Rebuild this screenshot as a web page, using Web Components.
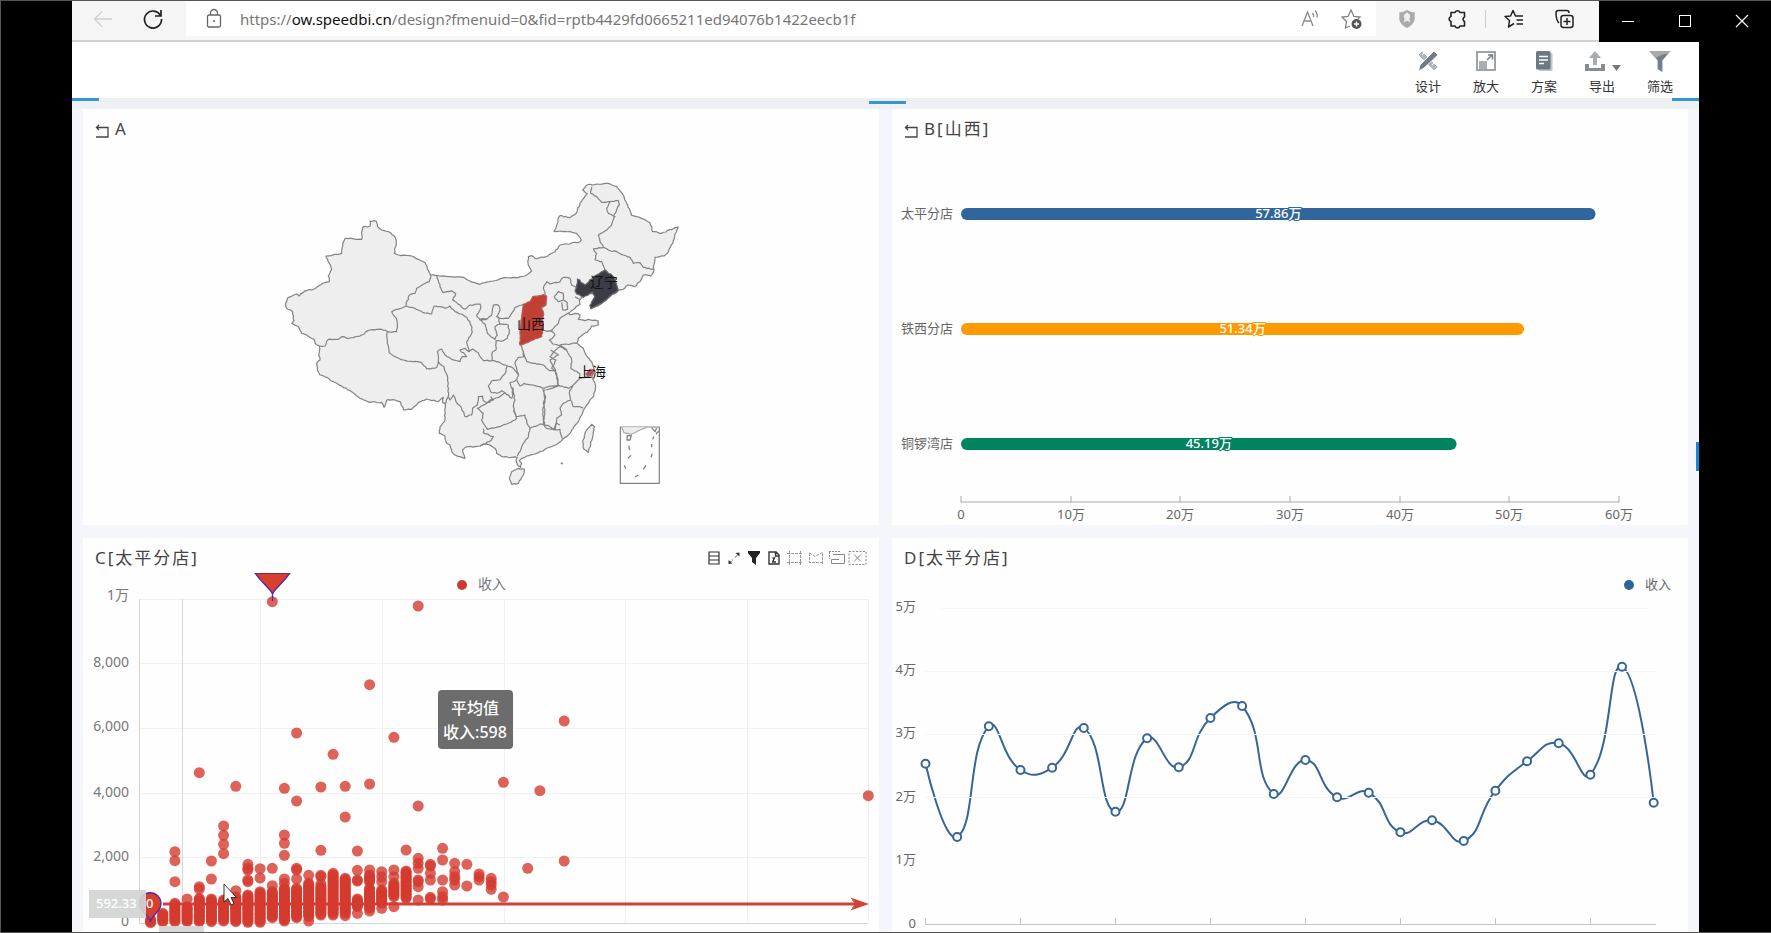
<!DOCTYPE html>
<html lang="zh-CN">
<head>
<meta charset="utf-8">
<title>SpeedBI</title>
<style>
  html, body { margin: 0; height: 100%; background: #000; }
  body { font-family: "Noto Sans", "Noto Sans CJK SC", sans-serif; font-size: 13px; color: #333; }
</style>
</head>
<body>
<app-window>
  <browser-bar slot="bar"></browser-bar>
  <report-toolbar slot="toolbar"></report-toolbar>
  <dash-board>
    <dash-panel caption="A" back><china-map></china-map></dash-panel>
    <dash-panel caption="B[山西]" back><bar-chart></bar-chart></dash-panel>
    <dash-panel caption="C[太平分店]" compact><chart-tools slot="tools"></chart-tools><scatter-chart></scatter-chart></dash-panel>
    <dash-panel caption="D[太平分店]" compact><line-chart></line-chart></dash-panel>
  </dash-board>
</app-window>
<script>
const define = (name, render) => customElements.define(name, class extends HTMLElement {
  connectedCallback() {
    if (this.shadowRoot) return;
    this.attachShadow({ mode: 'open' }).innerHTML = render(this);
  }
});

const buttonReset = `button{all:unset;box-sizing:border-box;display:flex;align-items:center;justify-content:center;cursor:pointer}svg{display:block}`;

define('app-window', () => `
<style>
:host{display:flex;flex-direction:column;box-sizing:border-box;height:100vh;overflow:hidden;background:#000;border:solid #555;border-width:1px 0 1px 1px}
main{flex:1;margin:0 72px 0 71px;display:flex;flex-direction:column;min-height:0;background:#f4f5fb}
</style>
<slot name="bar"></slot><main><slot name="toolbar"></slot><slot></slot></main>`);

define('browser-bar', () => `
<style>
:host{display:flex;height:41px;margin-left:71px;flex:none}
${buttonReset}
.bar{flex:1;display:flex;box-sizing:border-box;border-bottom:2px solid #d2d2d2;background:#f7f7f7}
.nav{display:flex;align-items:center;width:114px;box-sizing:border-box;padding:0 8px 3px 6px;background:#f5f5f5}
.nav button{width:50px;height:34px}
.address{flex:1;display:flex;align-items:center;background:#fff;height:35px;padding:0 4px 0 16px}
.address>svg{flex:none;margin-right:14px}
.url{flex:1;font-size:15px;line-height:24px;color:#777;white-space:nowrap}
.url b{font-weight:400;color:#111}
.address button{width:41px;height:34px}
.ext{display:flex;align-items:center;box-sizing:border-box;width:223px;padding:0 9px 3px 5px}
.ext button{flex:1;height:34px}
.ext i{width:1px;height:18px;margin:0 2px;background:#ccc}
.win{display:flex;width:172px}
.win button{flex:1;height:39px}
</style>
<div class="bar">
 <div class="nav">
  <button aria-label="后退"><svg width="20" height="20" fill="none" stroke="#cfcfcf" stroke-width="1.3"><path d="M19 10H2M9 2.500L1.500 10L9 17.500"/></svg></button>
  <button aria-label="刷新"><svg width="22" height="22" fill="none" stroke="#222" stroke-width="1.700"><path d="M18.500 7.500A8.500 8.500 0 1 0 19.500 11M19 2V8H13"/></svg></button>
 </div>
 <div class="address">
  <svg width="24" height="24" fill="none" stroke="#666" stroke-width="1.300"><rect x="5.500" y="8" width="13" height="12" rx="1.500"/><path d="M8.500 8V6A3.500 3.500 0 0 1 15.500 6V8"/><circle cx="12" cy="14" r="1" fill="#666" stroke="none"/></svg>
  <div class="url" role="textbox" aria-label="地址">https://<b>ow.speedbi.cn</b>/design?fmenuid=0&amp;fid=rptb4429fd0665211ed94076b1422eecb1f</div>
  <button aria-label="大声朗读"><svg width="22" height="20" fill="none" stroke="#8a8a8a" stroke-width="1.300"><path d="M2 17L7.500 3L13 17M4 12H11M12.500 4A5 5 0 0 1 13.500 8M15 1.500A8 8 0 0 1 17 8.500"/></svg></button>
  <button aria-label="收藏"><svg width="22" height="22" fill="none" stroke="#808080" stroke-width="1.300"><path d="M9 18L4.500 20L5.500 13.500L1 9L7 8.500L10 2L13 8.500L19 9L17 11"/><circle cx="15.500" cy="16" r="5" fill="#555" stroke="none"/><path d="M13 16H18M15.500 13.500V18.500" stroke="#fff"/></svg></button>
 </div>
 <div class="ext">
  <button aria-label="盾牌"><svg width="18" height="20" viewBox="0 0 20 22"><path d="M10 1C13 3 16 3.500 18.500 3.500V11C18 16 14 19 10 21C6 19 2 16 1.500 11V3.500C4 3.500 7 3 10 1Z" fill="#aaa"/><path d="M10 3.500L11.500 5C14 6 14 9 12.500 11L14 15L10 13L6 15L7.500 11C6 9 6 6 8.500 5Z" fill="#eee"/></svg></button>
  <button aria-label="扩展"><svg width="22" height="22" fill="none" stroke="#222" stroke-width="1.600" stroke-linejoin="round"><path d="M4 4.500H8A2.700 2.700 0 0 1 13 4.500H17.500V9A2.500 2.500 0 0 0 17.500 13.500V18H13A2.600 2.600 0 0 1 8 18H4V13.500A2.600 2.600 0 0 1 4 8.500Z"/></svg></button>
  <i></i>
  <button aria-label="收藏夹"><svg width="22" height="22" fill="none" stroke="#222" stroke-width="1.500" stroke-linejoin="round"><path d="M11 15.500L5.500 19L6.500 12.500L2 8.500L7.500 8L10 2.500L12.500 8H20M13.500 12H20M13.500 16H20"/></svg></button>
  <button aria-label="集锦"><svg width="22" height="22" fill="none" stroke="#222" stroke-width="1.500"><path d="M5 15C2 12 2 9 2 5C2 3.500 3 2.500 4.500 2.500H13C14.500 2.500 15 3.500 15 5"/><rect x="7" y="7.500" width="12" height="12" rx="2.500"/><path d="M13 10V17M9.500 13.500H16.500"/></svg></button>
 </div>
</div>
<div class="win">
 <button aria-label="最小化"><svg width="14" height="14" stroke="#fff"><path d="M1 7.500H13"/></svg></button>
 <button aria-label="最大化"><svg width="14" height="14" stroke="#fff" fill="none"><rect x="1.500" y="1.500" width="11" height="11"/></svg></button>
 <button aria-label="关闭"><svg width="14" height="14" stroke="#fff" stroke-width="1.200"><path d="M1 1L13 13M13 1L1 13"/></svg></button>
</div>`);

define('report-toolbar', () => `
<style>
:host{display:flex;justify-content:flex-end;height:56px;flex:none;background:#fff;padding-right:10px}
${buttonReset}
button{width:58px;flex-direction:column;justify-content:flex-start;padding-top:8px;gap:4px;font-size:13px;line-height:20px;color:#333}
</style>
<button><svg width="22" height="22"><path d="M5 1L21 17L17 21L1 5Z" fill="#aeb6bd" stroke="#fff"/><path d="M5 5L7 3M9 9L11 7M15 15L17 13" stroke="#fff"/><path d="M17 1L21 5L7 18L1.500 21L3 15Z" fill="#717b85" stroke="#fff" stroke-width=".8"/></svg>设计</button>
<button><svg width="22" height="22" fill="none" stroke="#939aa0" stroke-width="1.800"><rect x="2" y="2" width="18" height="18"/><rect x="4" y="11" width="8" height="8" fill="#a9aeb2" stroke="none"/><path d="M12 10L17 5M13 5H17.500V9.500" stroke="#777f86" stroke-width="1.500"/></svg>放大</button>
<button><svg width="22" height="22"><path d="M17 3H19.500V21H6V19H17Z" fill="#bcc8d4"/><rect x="3" y="1" width="14.500" height="18.500" rx="1.500" fill="#6e7882"/><path d="M6 6.500H15M6 10H15M6 13.500H11" stroke="#fff" stroke-width="1.600"/></svg>方案</button>
<button><svg width="58" height="22"><path d="M22 1L28 8H24V15H20V8H16Z" fill="#a5abb0"/><path d="M12 14H16V18H28V14H32V21H12Z" fill="#858c92"/><path d="M39 15H48L43.500 21Z" fill="#777"/></svg>导出</button>
<button><svg width="24" height="22" viewBox="0 1 24 23"><path d="M1 2H23L14.500 12V24L9.500 21V12Z" fill="#777e85"/><path d="M1 2H23L20.500 5C15 4 9 9 7 9.500Z" fill="#aaa"/></svg>筛选</button>`);

define('dash-board', () => `
<style>
:host{position:relative;display:grid;grid-template-columns:1fr 1fr;gap:13px;padding:11px 11px 0;background:linear-gradient(#eceff2,#f0f1f5 11px,#f5f5fc 12px)}
i{position:absolute;height:3px;background:#3597d0}
.l{left:0;top:0;width:27px}.r{right:0;top:0;width:27px}.c{left:49%;top:3px;width:37px}
.s{right:0;top:344px;width:3px;height:29px;background:#1784d8}
</style><slot></slot><i class="l"></i><i class="c"></i><i class="r"></i><i class="s"></i>`);

define('dash-panel', el => `
<style>
:host{display:block;background:#fefefe;min-width:0}
header{display:flex;align-items:center;box-sizing:border-box;height:${el.hasAttribute('compact') ? 35 : 40}px;padding:${el.hasAttribute('compact') ? '4px' : '0'} 11px 0 12px}
h2{flex:1;margin:0;font-size:17px;line-height:24px;font-weight:400;letter-spacing:2px;color:#444}
${buttonReset}
button{margin:4px 5px 0 0}
</style>
<header>${el.hasAttribute('back') ? '<button aria-label="返回"><svg width="15" height="16" fill="none" stroke="#444" stroke-width="1.300"><path d="M1 14H13V4.500H2M4 2L1.500 4.500L4 7"/></svg></button>' : ''}<h2>${el.getAttribute('caption')}</h2><slot name="tools"></slot></header>
<slot></slot>`);

define('chart-tools', () => `
<style>:host{display:flex}${buttonReset}button{width:20px;height:20px}button:nth-of-type(n+5){width:21px}svg{flex:none}</style>
<button aria-label="明细"><svg width="12" height="14" fill="none" stroke="#333" stroke-width="1.200"><path d="M1 1H11V13H1ZM1 5H11M1 9H11"/></svg></button>
<button aria-label="展开"><svg width="12" height="14" fill="#333" stroke="#333"><path d="M1.500 12L5 8.500M7 6.500L10.500 3" stroke-dasharray="3 1"/><path d="M11.500 1.500V5.500L7.500 2ZM.5 13V9L4.500 12.500Z" stroke="none"/></svg></button>
<button aria-label="筛选"><svg width="12" height="14"><path d="M0 0H12V2L8 7V14L4 11V7L0 2Z" fill="#222"/></svg></button>
<button aria-label="导出"><svg width="12" height="14" fill="none" stroke="#333" stroke-width="1.400"><path d="M1 1H8L11 4V13H1ZM7.500 1V5H11M4 11H8M4.500 7H6.500L4.500 11"/></svg></button>
<button aria-label="框选"><svg width="18" height="14" fill="none" stroke="#999"><path d="M1 2.500H17M1 11.500H17M3.500 0V14M14.500 0V14" stroke-dasharray="3 1"/></svg></button>
<button aria-label="圈选"><svg width="16" height="14" fill="none" stroke="#999"><path d="M1.500 2L7 5.500L14.500 1.500V13M1.500 2V11.500H15" stroke-dasharray="3 1"/></svg></button>
<button aria-label="保持选择"><svg width="18" height="14" fill="none" stroke="#888"><path d="M1 .5H13M1.500 1V8" stroke-dasharray="2 1"/><path d="M5 3.500H16.500V12.500H3.500V8.500H11"/></svg></button>
<button aria-label="清除选择"><svg width="19" height="14" fill="none" stroke="#888"><rect x="1" y=".5" width="17" height="13" stroke-dasharray="2 1.500"/><path d="M6 3.500L13 10.500M13 3.500L6 10.500"/></svg></button>`);

const chartBase = `:host{display:block}svg{display:block;width:100%;height:auto}text{font-size:13px;fill:#666}`;

/* ---------- A: map of provinces ---------- */
let seed = 7;
const rnd = () => (seed = (seed * 16807) % 2147483647) / 2147483647 - .5;
const parse = (s, ox, oy) => s.trim().split(/\s+/).map(p => { const [x, y] = p.split(',').map(Number); return [x + ox, y + oy]; });
function rough(pts) {
  const out = [pts[0]];
  for (let i = 1; i < pts.length; i++) {
    const [a, b] = pts[i - 1], [c, d] = pts[i], n = Math.floor(Math.hypot(c - a, d - b) / 6);
    for (let k = 1; k < n; k++) out.push([a + (c - a) * k / n + rnd() * 3.5, b + (d - b) * k / n + rnd() * 3.5]);
    out.push(pts[i]);
  }
  return out;
}
const toPath = p => 'M' + p.map(q => q.map(v => v.toFixed(1)).join(' ')).join('L');
const WEST = [0, 0], EAST = [630, 0], SOUTH = [390, 390];
const coast = [
  ['300,153 318,153 323,170 335,180 355,185 372,197 379,212 376,232 373,250 385,255 425,258 445,268 465,278 472,296 482,315 500,317 540,320 580,322 600,333 620,340', WEST],
  ['0,343 28,335 65,325 110,323 140,315 155,303 145,285 145,260 155,257 165,265 190,262 225,245 240,225 300,215 304,210 290,190 255,184 222,184 240,137 270,143 290,128 300,100 322,72 308,60 320,46 350,42 385,40 410,50 428,72 440,100 455,136 480,143 510,158 518,185 545,190 580,176 595,171 585,192 578,220 562,250 552,258 525,262 520,290 522,300 512,318 490,315 480,335 462,350 445,345 430,358 413,362 410,368 390,380 365,400 345,410 333,416 330,406 340,395 345,380 338,370 325,372 312,378 298,392 300,402 285,415 265,430 270,434 285,430 300,435 295,448 315,452 325,448 355,453 355,465 335,468 325,482 310,493 295,505 290,520 310,535 318,555 335,575 340,590 345,605 335,620 345,640 347,650 340,680 320,705 305,735 295,755 280,775 265,795 248,808 235,820 215,830 195,838 180,845 165,852 140,858 125,865 118,872 125,880 122,892 112,885 108,870 112,862 95,862 65,860 50,850 45,835 30,825 10,822', EAST],
  ['240,438 225,440 200,440 188,450 195,475 180,470 165,465 155,455 150,435 140,430 135,408 118,400 120,380 133,365 135,335 135,310 128,308 130,292 115,305 80,297 55,308 35,328 12,330', SOUTH],
  ['400,718 390,695 375,690 350,690 342,712 335,697 300,697 270,685 245,665 215,648 200,640 190,635 170,622 150,615 142,600 140,580 150,570 147,550 148,528 135,520 132,508 110,495 95,490 85,470 65,460 72,452 68,425 50,415 47,400 52,385 80,372 88,378 105,362 130,358 165,338 178,335 175,318 185,298 178,280 168,258 215,250 215,240 225,205 275,208 278,172 300,168 300,153', WEST]
];
const borders = [
  [WEST, ['482,315 478,335 462,342 440,355 435,370 418,375 408,408 365,425 375,440 382,460 380,485 352,485',
    '352,485 335,478 300,480 275,495 250,503 230,505 215,500 205,508 175,508 165,528 148,528',
    '408,408 425,412 445,420 460,428 485,432 493,408 510,410 525,415 540,408 555,425 575,432 590,442 600,455 607,485 600,500 590,515 597,545',
    '352,485 352,520 358,548 375,560 400,570 430,575 455,578 470,597 500,592 505,575 502,545 515,537 525,555 545,568 570,575 577,560 590,560 570,540 585,535 597,545 608,537 625,548 640,572 665,572',
    '500,317 510,350 520,368 545,362 557,370 548,390 570,405 585,418 600,405 630,402 632,415 620,435 630,450 652,448']],
  [SOUTH, ['240,58 262,56 275,45 280,15 295,15 300,30 290,50 310,56 325,55 335,40 345,22 372,12',
    '240,60 255,72 262,100 285,118 292,105 285,80 300,72 295,50', '300,72 325,75 328,95 322,115 310,122 288,122 288,150 278,155 275,182',
    '275,182 300,188 322,198 318,215 300,240 275,243 265,258 272,275 290,280 305,272 315,278 335,295 338,270 330,248 350,238 356,225 340,205 322,198',
    '356,225 350,205 345,190 355,172 372,170 370,155 362,135', '370,155 380,185 400,190 430,195 450,212 467,210 450,180 475,165 452,150',
    '350,238 360,258 372,250 400,255 430,265 445,260 475,258 470,235 467,210',
    '338,262 345,300 340,320 348,350 375,345 380,365 390,385 420,372 432,375 435,330 430,310 437,290 428,268',
    '315,278 300,290 275,298 262,308 232,325 250,340 245,360 262,388 290,382 320,372 350,355 340,330',
    '115,185 132,200 143,235 145,290 150,300 160,285 168,305 185,325 195,350 215,345 218,325 232,315 235,290 248,288 250,302 262,308 280,300 272,290', '145,290 135,312',
    '250,386 250,398 280,410 268,425 240,438', '390,385 385,410 370,430 360,455 352,468', '432,375 440,385 465,388 470,370 480,375', '370,60 365,110 362,135']],
  [EAST, ['190,762 210,770 222,780 240,778 247,806', '192,660 195,695 188,720 190,762', '222,780 230,745 245,735 240,715 250,700 272,690 280,710 300,710 310,715',
    '192,660 215,655 235,645 265,655 280,645 300,625 325,620', '272,690 268,668 280,645', '235,645 230,610 215,595 228,570 210,560 222,545 240,530 260,540 275,570 272,595 300,612 300,625',
    '260,540 240,525 290,520', '265,430 240,445 235,460 215,480 225,495 208,510 218,522 240,528', '190,480 215,485',
    '195,375 190,355 200,335 210,342 240,335 250,322 270,325 275,345 290,352', '222,380 235,365 250,370 250,390 235,395 222,380', '250,390 262,398 262,418 248,420 245,397', '285,380 300,388',
    '375,300 365,275 345,270 350,250 340,237 370,232 385,240 410,245 430,255 450,262 460,280 480,278 490,292 520,298',
    '370,232 360,215 355,195 380,180 395,165 405,140 385,130 380,115 390,95 365,97 350,80 332,70 335,50', '390,95 415,92 418,105 400,140',
    '375,300 400,320 408,340 414,362']]
];
const shape = s => toPath(rough(parse(s, ...EAST))) + 'Z';

define('china-map', () => {
  const land = toPath(rough(coast.flatMap(([s, o]) => parse(s, ...o)))) + 'Z';
  const lines = borders.map(([o, list]) => list.map(s => toPath(rough(parse(s, ...o)))).join('')).join('');
  return `<style>${chartBase}
  path,rect{vector-effect:non-scaling-stroke;stroke-linejoin:round}
  text{font-size:14px;fill:#111;text-anchor:middle}</style>
<svg viewBox="83 149 796 376" role="img" aria-label="中国地图">
<g transform="translate(270 170) scale(.33333)" fill="#eee" stroke="#838383" stroke-width="1.200">
<path d="${land}"/><path d="${lines}" fill="none"/>
<path d="${shape('335,763 344,770 338,800 325,848 312,838 308,815 320,780')}"/>
<path d="${shape('95,905 115,895 133,897 130,915 115,940 95,943 88,925')}"/>
<path d="M874 879h3v2h-3Z"/>
<path fill="#c23f35" stroke="#b06058" d="${shape('130,403 150,395 158,380 190,374 200,378 198,405 185,412 190,425 188,470 185,500 160,510 135,520 120,525 120,490 125,440')}"/>
<path fill="#3c3c46" stroke="#66666c" d="${shape('285,362 290,345 292,327 315,345 340,320 375,300 400,320 408,340 414,362 390,378 365,400 345,410 333,416 330,406 345,380 338,367 310,382 290,372')}"/>
<path fill="#c04a58" stroke="#a66" d="${shape('318,612 330,598 343,600 335,615 325,620')}"/>
<rect x="1051" y="771" width="117" height="169" fill="#fefefe"/>
<path d="M1055 772L1062 788L1085 793L1110 780L1130 772" stroke="#aaa"/>
<path fill="none" stroke-width="1.300" d="M1145 773L1155 785L1160 773M1166 783L1158 792M1072 797H1084L1080 810H1071ZM1076 827L1079 840M1083 856L1074 865M1063 886L1067 896M1095 921L1105 915M1120 898L1128 886M1143 862L1147 851M1145 822V832M1152 800L1148 808"/>
</g>
<text x="531" y="329">山西</text><text x="604" y="287">辽宁</text><text x="592" y="377">上海</text>
</svg>`;
});

/* ---------- B: revenue by branch ---------- */
define('bar-chart', () => {
  const rows = [['太平分店', 57.86, '#30669c', 214], ['铁西分店', 51.34, '#ff9900', 329], ['铜锣湾店', 45.19, '#00845f', 444]];
  const ticks = [0, 10, 20, 30, 40, 50, 60];
  const x = v => 961 + v * 10.967;
  return `<style>${chartBase}.cat{text-anchor:end}.val{fill:#fff;font-weight:500;text-anchor:middle;paint-order:stroke;stroke-width:2px}.tick{text-anchor:middle}</style>
<svg viewBox="892 149 796 376" role="img" aria-label="各分店收入">
${rows.map(([n, v, c, y]) => `<text class="cat" x="953" y="${y + 4}">${n}</text><rect x="961" y="${y - 6}" width="${x(v) - 961}" height="12" rx="6" fill="${c}"/><text class="val" x="${(961 + x(v)) / 2}" y="${y + 4}" stroke="${c}">${v}万</text>`).join('')}
<path d="M961 502H1619${ticks.map(v => `M${Math.round(x(v))} 502.500V496`).join('')}" stroke="#aaa" fill="none"/>
${ticks.map(v => `<text class="tick" x="${Math.round(x(v))}" y="519">${v ? v + '万' : 0}</text>`).join('')}
</svg>`;
});

/* ---------- C: scatter of revenue ---------- */
/* Per column: single values, and [from, to] for runs of overlapping marks. */
const columns = {
  0: [[1198, 1208]], 1: [[1180, 1205]], 2: [995, 1022, 1085, [1150, 1205]], 3: [1137, [1160, 1205]], 4: [758, 1100, 1107, [1135, 1205]],
  5: [1023, 1077, [1137, 1205]], 6: [918, 946, 973, 1001, [1140, 1203]], 7: [799, 1112, [1130, 1205]], 8: [1033, 1045, 1050, 1080, 1085, [1125, 1207]],
  9: [1046, 1074, [1115, 1207]], 10: [245, 1045, 1097, [1115, 1193]], 11: [805, 945, 970, 1006, 1077, 1090, [1105, 1203]],
  12: [639, 843, 1045, 1050, 1077, [1105, 1193]], 13: [1066, [1090, 1190], 1203], 14: [801, 991, 1066, 1070, 1092, [1100, 1185]],
  15: [703, [1060, 1180], 1185], 16: [799, 891, [1075, 1180], 1187], 17: [993, 1051, 1080, 1083, [1137, 1160], 1180],
  18: [494, 792, 1050, [1065, 1085], [1105, 1165], 1173], 19: [1055, 1070, 1085, [1110, 1150], 1165], 20: [652, 1050, 1070, [1090, 1130], 1160],
  21: [990, [1053, 1135]], 22: [258, 858, 1015, 1030, 1045, 1080, 1085, 1100, 1140], 23: [1033, 1038, 1060, 1080, 1132, 1137],
  24: [985, 1020, 1080, 1115, 1130, 1140], 25: [1030, 1055, 1070, 1080, 1095], 26: [1033, 1098], 27: [1062, 1070, 1080],
  28: [1075, 1085, 1095, 1108], 29: [787, 1131], 31: [1045], 32: [812], 34: [603, 1023], 59: [827]
};
const expand = e => {
  if (!Array.isArray(e)) return [e];
  const n = Math.ceil((e[1] - e[0]) / 4);
  return Array.from({ length: n + 1 }, (_, i) => e[0] + (e[1] - e[0]) * i / n);
};
define('scatter-chart', () => {
  let dots = '';
  for (const [k, list] of Object.entries(columns)) for (const y of list.flatMap(expand))
    dots += `<circle cx="${(150.6 + 12.165 * k).toFixed(1)}" cy="${(520 + y / 3).toFixed(1)}" r="5.500"/>`;
  return `<style>${chartBase}.y{font-size:14px;text-anchor:end;fill:#777}.dots{fill:#d43b2f;fill-opacity:.8}
  .tip{font-size:16px;font-weight:500;fill:#fff;text-anchor:middle}.tag{fill:#fff;font-weight:500}</style>
<svg viewBox="83 573 796 360" role="img" aria-label="收入散点图">
<path d="M139 599.500H868M139 663.500H868M139 728.500H868M139 793.500H868M139 857.500H868M260.500 599V923M382.500 599V923M504.500 599V923M625.500 599V923M747.500 599V923M868.500 599V923" stroke="#f0f1f1" fill="none"/>
<path d="M139.500 599V923.500H868M182.500 599V923" stroke="#d5d7d7" fill="none"/>
${[['1万', 600], ['8,000', 667], ['6,000', 731], ['4,000', 797], ['2,000', 861], ['0', 926]].map(([t, y]) => `<text class="y" x="129" y="${y}">${t}</text>`).join('')}
<circle cx="462" cy="585" r="5" fill="#cb3b34"/><text x="478" y="589" style="font-size:14px;fill:#777">收入</text>
<path d="M163 904H858" stroke="#cf4436" stroke-width="3"/><path d="M869 904L850.500 897.500L855 904L850.500 910.500Z" fill="#cf4436"/>
<g class="dots">${dots}</g>
<path d="M253 570H292C284 583 275 588 272.500 594V601V594C270 588 261 583 253 570Z" fill="#d8402d" stroke="#4a28b8" stroke-width="1.300"/>
<path d="M255 573.500H290" stroke="#6a3060"/>
<path d="M150.500 922C150 915 139.500 913 139.500 903.500A10.700 10.700 0 0 1 161 903.500C161 912 152 914 150.500 922Z" fill="#d8402d" stroke="#4a28b8" stroke-width="1.300"/>
<rect x="89" y="890" width="57" height="28" fill="#d2d5d4" fill-opacity=".92"/><text class="tag" x="96" y="908">592.33</text>
<text class="tag" x="146" y="908">0</text>
<rect x="159" y="926" width="45" height="8" fill="#d4d4d4" fill-opacity=".9"/>
<rect x="438" y="690" width="75" height="59" rx="4" fill="#6c6c6c"/><text class="tip" x="475" y="714">平均值</text><text class="tip" x="475" y="738">收入:598</text>
<path d="M224 884V902L228 898.500L231 905L234 903.500L231 897.500H236.500Z" fill="#fff" stroke="#222" stroke-width=".9"/>
</svg>`;
});

/* ---------- D: revenue trend ---------- */
define('line-chart', () => {
  const ys = [731, 951, 619, 750, 743, 624, 875, 655, 742, 594, 558, 822, 720, 832, 818, 937, 901, 963, 812, 724, 670, 764, 440, 848];
  const p = ys.map((y, i) => [925.5 + 31.66 * i, 520 + y / 3]);
  const dist = (a, b) => Math.hypot(a[0] - b[0], a[1] - b[1]);
  const handle = i => {
    const a = p[i - 1], b = p[i], c = p[i + 1];
    if (!a || !c) return [b, b];
    const r = dist(b, c) / (dist(a, b) + dist(b, c)), vx = (c[0] - a[0]) / 2, vy = (c[1] - a[1]) / 2;
    return [[b[0] - vx * (1 - r), b[1] - vy * (1 - r)], [b[0] + vx * r, b[1] + vy * r]];
  };
  let d = `M${p[0]}`;
  for (let i = 1; i < p.length; i++) d += `C${handle(i - 1)[1]} ${handle(i)[0]} ${p[i]}`;
  return `<style>${chartBase}.y{text-anchor:end}</style>
<svg viewBox="892 573 796 360" role="img" aria-label="收入趋势">
<path d="${d}" fill="none" stroke="#376595" stroke-width="2"/>
<path d="M942 608.500H1648M925 671.500H1656M925 734.500H1656M925 797.500H1656" stroke="#f4f6f6"/>
<path d="M925 924.500H1656${[0, 1, 2, 3, 4, 5, 6, 7].map(i => `M${925.5 + 95 * i} 924V918`).join('')}" stroke="#c4c4c4" fill="none"/>
<g fill="#fff" stroke="#376595" stroke-width="2">${p.map(q => `<circle cx="${q[0]}" cy="${q[1]}" r="4"/>`).join('')}</g>
${['5万', '4万', '3万', '2万', '1万', '0'].map((t, i) => `<text class="y" x="916" y="${[611, 674, 737, 801, 864, 928][i]}">${t}</text>`).join('')}
<circle cx="1629" cy="585" r="5" fill="#30629b"/><text x="1645" y="589">收入</text>
</svg>`;
});
</script>
</body>
</html>
